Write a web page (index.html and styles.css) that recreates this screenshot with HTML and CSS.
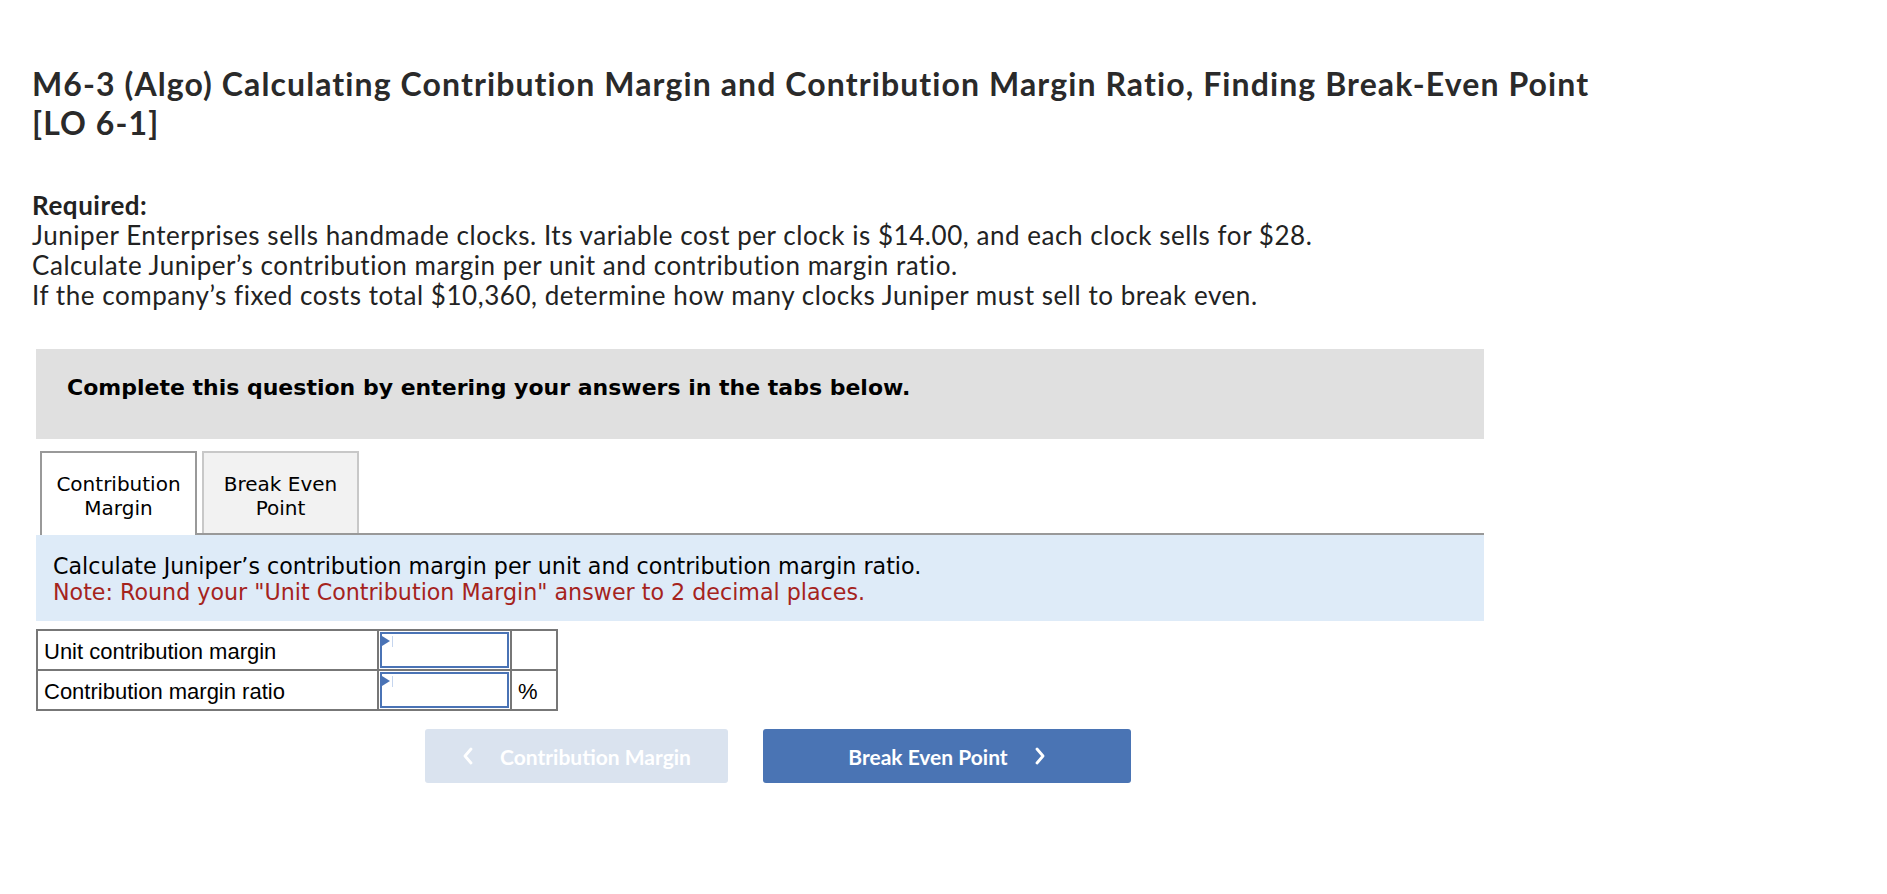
FILE: index.html
```html
<!DOCTYPE html>
<html lang="en">
<head>
<meta charset="utf-8">
<title>M6-3 (Algo) Calculating Contribution Margin</title>
<link rel="stylesheet" href="styles.css">
</head>
<body>
<div class="page">
  <h1 class="title">M6-3 (Algo) Calculating Contribution Margin and Contribution Margin Ratio, Finding Break-Even Point<br>[LO 6-1]</h1>

  <div class="required">
    <p class="req-label">Required:</p>
    <p>Juniper Enterprises sells handmade clocks. Its variable cost per clock is $14.00, and each clock sells for $28.</p>
    <p>Calculate Juniper’s contribution margin per unit and contribution margin ratio.</p>
    <p>If the company’s fixed costs total $10,360, determine how many clocks Juniper must sell to break even.</p>
  </div>

  <div class="question">
    <div class="instructions">Complete this question by entering your answers in the tabs below.</div>

    <div class="tabs">
      <div class="tab active">Contribution<br>Margin</div>
      <div class="tab">Break Even<br>Point</div>
    </div>

    <div class="panel">
      <p>Calculate Juniper’s contribution margin per unit and contribution margin ratio.</p>
      <p class="note">Note: Round your "Unit Contribution Margin" answer to 2 decimal places.</p>
    </div>

    <table class="answer">
      <tr>
        <td class="label">Unit contribution margin</td>
        <td class="input-cell"><div class="field"></div></td>
        <td class="unit"></td>
      </tr>
      <tr>
        <td class="label">Contribution margin ratio</td>
        <td class="input-cell"><div class="field"></div></td>
        <td class="unit">%</td>
      </tr>
    </table>

    <div class="nav">
      <button class="btn prev" type="button">
        <svg class="chev" width="12" height="18" viewBox="0 0 12 18"><polyline points="9,2 3,9 9,16" fill="none" stroke="#fff" stroke-width="2.8" stroke-linecap="round" stroke-linejoin="round"/></svg>
        <span>Contribution Margin</span>
      </button>
      <button class="btn next" type="button">
        <span>Break Even Point</span>
        <svg class="chev" width="12" height="18" viewBox="0 0 12 18"><polyline points="3,2 9,9 3,16" fill="none" stroke="#fff" stroke-width="2.8" stroke-linecap="round" stroke-linejoin="round"/></svg>
      </button>
    </div>
  </div>
</div>
</body>
</html>
```

FILE: styles.css
```css
html, body {
  margin: 0;
  padding: 0;
  background: #ffffff;
}

.page {
  padding: 64px 0 0 32px;
  color: #2a2a2a;
}

.title {
  margin: 0;
  font-family: "Lato", "Open Sans", sans-serif;
  font-weight: 700;
  font-size: 32px;
  line-height: 39px;
  letter-spacing: 1.1px;
  color: #2a2a2a;
}

.required {
  margin-top: 48px;
  font-family: "Lato", "Open Sans", sans-serif;
  font-size: 26px;
  line-height: 30px;
  letter-spacing: 0.55px;
  color: #222;
}

.required p {
  margin: 0;
}

.req-label {
  font-weight: 700;
}

.question {
  margin-top: 39px;
  margin-left: 4px;
  width: 1448px;
  font-family: "DejaVu Sans", Verdana, sans-serif;
  color: #000;
}

.instructions {
  box-sizing: border-box;
  height: 90px;
  background: #e0e0e0;
  padding: 27px 31px 0;
  font-weight: 700;
  font-size: 22px;
  line-height: 24px;
}

.tabs {
  display: flex;
  gap: 5px;
  margin: 12px 0 0 4px;
  border-bottom: 2px solid #999;
}

.tab {
  box-sizing: border-box;
  width: 157px;
  height: 82px;
  padding-top: 19px;
  border: 2px solid #c8c8c8;
  border-bottom: none;
  background: #f2f2f2;
  text-align: center;
  font-size: 20px;
  line-height: 24px;
}

.tab.active {
  height: 84px;
  margin-bottom: -2px;
  background: #fff;
  border-color: #999;
}

.panel {
  padding: 18px 17px 16px;
  background: #deebf8;
  font-size: 22.2px;
  line-height: 26px;
}

.panel p {
  margin: 0;
}

.panel .note {
  color: #a5231d;
}

.answer {
  margin-top: 8px;
  border-collapse: collapse;
  width: 522px;
  font-family: "Liberation Sans", Arial, sans-serif;
  font-size: 22px;
}

.answer td {
  border: 2px solid #777;
  height: 35px;
  padding: 0;
  vertical-align: middle;
}

.answer .label {
  width: 333px;
  padding-left: 6px;
  padding-top: 3px;
}

.answer .input-cell {
  width: 129px;
  padding: 1px;
}

.answer .unit {
  padding-left: 6px;
  padding-top: 3px;
}

.field {
  position: relative;
  box-sizing: border-box;
  height: 36px;
  border: 2px solid #4a73b5;
  background: #fff;
}

.field::before {
  content: "";
  position: absolute;
  left: 0;
  top: 2px;
  border-top: 5px solid transparent;
  border-bottom: 5px solid transparent;
  border-left: 8px solid #4a73b5;
}

.field::after {
  content: "";
  position: absolute;
  left: 10px;
  top: 2px;
  width: 1px;
  height: 11px;
  background: #c5d5ee;
}

.nav {
  display: flex;
  gap: 35px;
  margin-top: 18px;
  padding-left: 389px;
}

.btn {
  display: flex;
  align-items: center;
  justify-content: center;
  gap: 26px;
  height: 54px;
  padding: 0;
  border: none;
  border-radius: 3px;
  color: #fff;
  font-family: "Lato", "Roboto", sans-serif;
  font-weight: 700;
  font-size: 21px;
  cursor: pointer;
}

.btn.prev {
  width: 303px;
  background: #dae3ef;
}

.btn.next {
  width: 368px;
  background: #4a74b4;
}

.chev {
  display: block;
}
```
